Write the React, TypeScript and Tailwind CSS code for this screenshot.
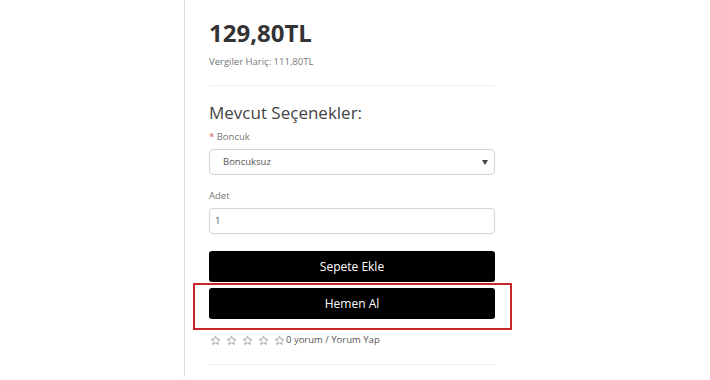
import React from "react";

function Star() {
  return (
    <svg width="11" height="11" viewBox="0 0 24 24" fill="none" stroke="#a0a0a0" strokeWidth="2" strokeLinejoin="round">
      <path d="M12 2.5l2.9 6.1 6.6.8-4.9 4.6 1.3 6.6L12 17.3l-5.9 3.3 1.3-6.6-4.9-4.6 6.6-.8z" />
    </svg>
  );
}

export default function App() {
  return (
    <div className="w-[710px] h-[380px] bg-white flex overflow-hidden" style={{ fontFamily: '"Open Sans", "Liberation Sans", sans-serif' }}>
      <div className="w-[185px] h-[378px] shrink-0 border-r border-[#dcdcdc] rounded-br-[3px]" />
      <div className="w-[286px] ml-[24px] flex flex-col">
        <div className="pt-[16px] text-[24px] leading-[33px] font-bold text-[#333]">129,80TL</div>
        <div className="mt-[6px] text-[9.5px] leading-[14px] text-[#777]">Vergiler Hariç: 111,80TL</div>
        <div className="mt-[16px] h-px bg-[#eeeeee]" />
        <div className="mt-[15px] text-[17px] leading-[24px] text-[#444]">Mevcut Seçenekler:</div>
        <div className="mt-[5px] text-[9.5px] leading-[14px] text-[#777]">
          <span className="text-[#d9534f]">*</span> Boncuk
        </div>
        <div className="mt-[5px] h-[26px] border border-[#d4d4d4] rounded-[4px] flex items-center justify-between pl-[13px] pr-[6px] text-[9.5px] text-[#555]">
          <span>Boncuksuz</span>
          <svg width="6" height="5" viewBox="0 0 6 5"><path d="M0 0h6L3 5z" fill="#444" /></svg>
        </div>
        <div className="mt-[14px] text-[9.5px] leading-[14px] text-[#777]">Adet</div>
        <div className="mt-[5px] h-[26px] border border-[#d4d4d4] rounded-[4px] flex items-center pl-[5px] text-[9.5px] text-[#555]">1</div>
        <button className="mt-[17px] h-[31px] bg-black rounded-[3px] text-white text-[12px] flex items-center justify-center">Sepete Ekle</button>
        <div className="relative mt-[6px]">
          <span className="absolute top-[-5px] bottom-[-11px] left-[-16px] right-[-17px] border-2 border-[#c9252b] pointer-events-none" />
          <button className="w-full h-[31px] bg-black rounded-[3px] text-white text-[12px] flex items-center justify-center">Hemen Al</button>
        </div>
        <div className="mt-[13px] h-[16px] flex items-center text-[9.5px] text-[#555]">
          <div className="flex gap-[5px] pl-px">
            <Star />
            <Star />
            <Star />
            <Star />
            <Star />
          </div>
          <span className="ml-[1px]">0 yorum / Yorum Yap</span>
        </div>
        <div className="mt-[16px] h-px bg-[#eeeeee]" />
      </div>
    </div>
  );
}
